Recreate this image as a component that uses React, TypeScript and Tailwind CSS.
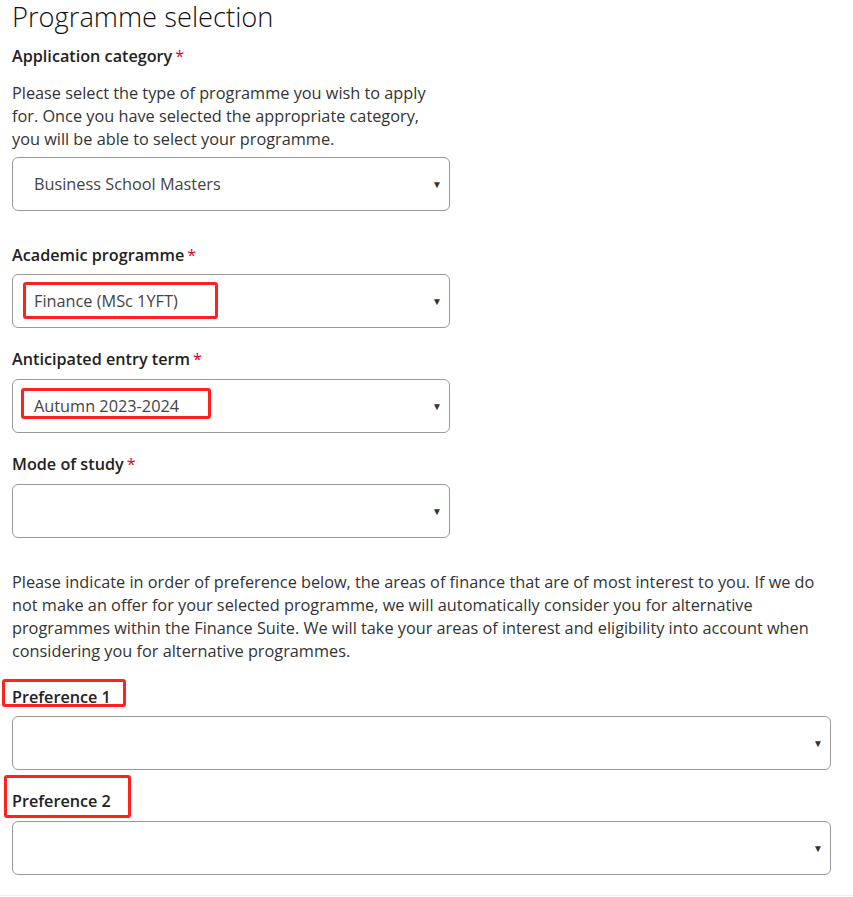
import React from 'react';

const font = { fontFamily: '"Open Sans", "Noto Sans", sans-serif' };

const Label = ({ text, required }: { text: string; required?: boolean }) => (
  <div className="text-[16.2px] leading-[24px] font-semibold text-[#222]">
    {text}
    {required && <span className="ml-[3px] font-normal text-[#e4002b]">*</span>}
  </div>
);

const SelectBox = ({
  value,
  wide,
  children,
}: {
  value?: string;
  wide?: boolean;
  children?: React.ReactNode;
}) => (
  <div
    className={`relative flex h-[54px] items-center justify-between rounded-[6px] border border-[#9a9a9a] bg-white pl-[21px] pr-[7px] ${
      wide ? 'w-[819px]' : 'w-[438px]'
    }`}
  >
    <span className="text-[16.3px] text-[#444]">{value}</span>
    <span className="text-[10px] leading-none text-[#333]">▼</span>
    {children}
  </div>
);

export default function App() {
  return (
    <div className="min-h-[897px] w-[853px] bg-white" style={font}>
      <div className="border-b border-[#ececec] px-[12px] pb-[20px]">
        <h1 className="text-[27.3px] leading-[34px] font-light text-[#111]">Programme selection</h1>

        {/* Application category */}
        <div className="mt-[10px]">
          <Label text="Application category" required />
        </div>
        <p className="mt-[14px] w-[438px] text-[16.3px] leading-[23px] text-[#333]">
          Please select the type of programme you wish to apply for. Once you have selected the appropriate category,
          you will be able to select your programme.
        </p>
        <div className="mt-[6px]">
          <SelectBox value="Business School Masters" />
        </div>

        {/* Academic programme */}
        <div className="mt-[32px]">
          <Label text="Academic programme" required />
        </div>
        <div className="mt-[7px]">
          <SelectBox value="Finance (MSc 1YFT)">
            <div className="pointer-events-none absolute left-[10px] top-[7px] h-[37px] w-[195px] rounded-[3px] border-[3px] border-[#ff2020]" />
          </SelectBox>
        </div>

        {/* Anticipated entry term */}
        <div className="mt-[19px]">
          <Label text="Anticipated entry term" required />
        </div>
        <div className="mt-[8px]">
          <SelectBox value="Autumn 2023-2024">
            <div className="pointer-events-none absolute left-[8px] top-[8px] h-[31px] w-[190px] rounded-[3px] border-[3px] border-[#ff2020]" />
          </SelectBox>
        </div>

        {/* Mode of study */}
        <div className="mt-[19px]">
          <Label text="Mode of study" required />
        </div>
        <div className="mt-[8px]">
          <SelectBox />
        </div>

        <p className="mt-[33px] w-[819px] text-[16.3px] leading-[23px] text-[#333]">
          Please indicate in order of preference below, the areas of finance that are of most interest to you. If we do
          not make an offer for your selected programme, we will automatically consider you for alternative programmes
          within the Finance Suite. We will take your areas of interest and eligibility into account when considering
          you for alternative programmes.
        </p>

        {/* Preference 1 */}
        <div className="relative mt-[22px]">
          <Label text="Preference 1" />
          <div className="pointer-events-none absolute left-[-10px] top-[-6px] h-[28px] w-[124px] rounded-[3px] border-[3px] border-[#ff2020]" />
        </div>
        <div className="mt-[7px]">
          <SelectBox wide />
        </div>

        {/* Preference 2 */}
        <div className="relative mt-[19px]">
          <Label text="Preference 2" />
          <div className="pointer-events-none absolute left-[-8px] top-[-14px] h-[43px] w-[127px] rounded-[3px] border-[3px] border-[#ff2020]" />
        </div>
        <div className="mt-[8px]">
          <SelectBox wide />
        </div>
      </div>
    </div>
  );
}
